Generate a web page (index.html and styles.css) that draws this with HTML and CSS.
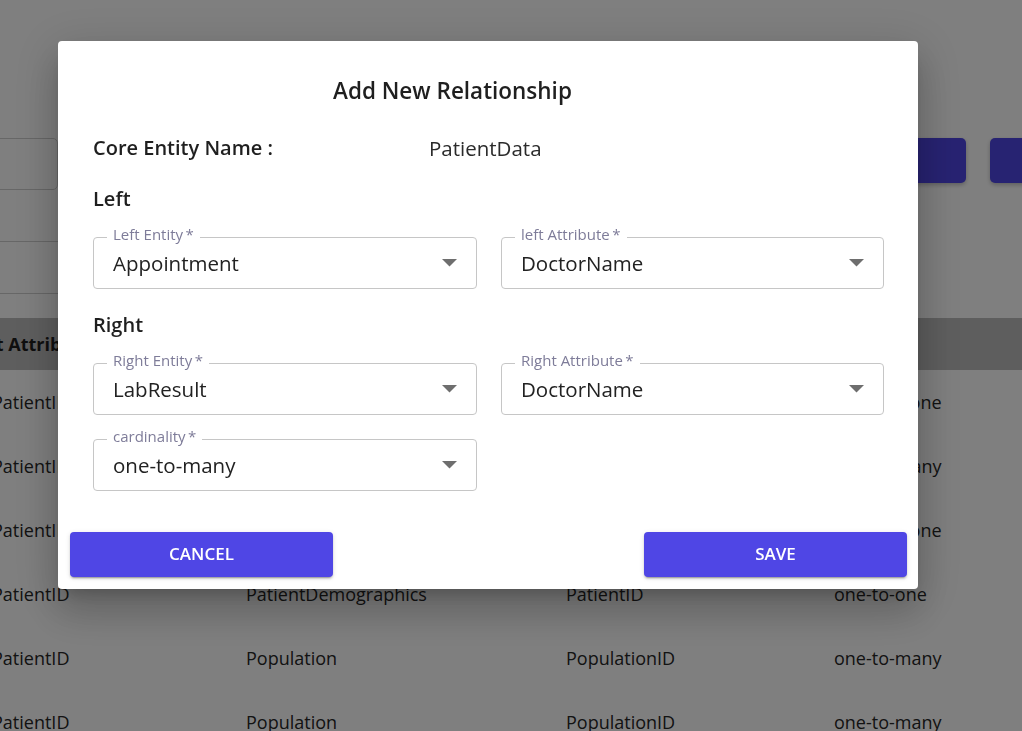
FILE: index.html
```html
<!DOCTYPE html>
<html lang="en">
<head>
<meta charset="utf-8">
<title>Add New Relationship</title>
<link rel="stylesheet" href="styles.css">
</head>
<body>
<div class="page">
  <div class="toolbar">
    <div class="side-list">
      <div class="side-box"></div>
      <div class="side-item"></div>
      <div class="side-item"></div>
    </div>
    <div class="actions">
      <div class="bg-btn"></div>
      <div class="bg-btn"></div>
    </div>
  </div>
  <div class="table">
    <div class="trow thead">
      <div class="cell c1">Left Attribute</div>
      <div class="cell">Right Entity</div>
      <div class="cell">Right Attribute</div>
      <div class="cell">Type</div>
    </div>
    <div class="trow">
      <div class="cell c1">PatientID</div>
      <div class="cell">Appointment</div>
      <div class="cell">PatientID</div>
      <div class="cell">many-to-one</div>
    </div>
    <div class="trow">
      <div class="cell c1">PatientID</div>
      <div class="cell">LabResult</div>
      <div class="cell">PatientID</div>
      <div class="cell">one-to-many</div>
    </div>
    <div class="trow">
      <div class="cell c1">PatientID</div>
      <div class="cell">Admission</div>
      <div class="cell">PatientID</div>
      <div class="cell">many-to-one</div>
    </div>
    <div class="trow">
      <div class="cell c1">PatientID</div>
      <div class="cell">PatientDemographics</div>
      <div class="cell">PatientID</div>
      <div class="cell">one-to-one</div>
    </div>
    <div class="trow">
      <div class="cell c1">PatientID</div>
      <div class="cell">Population</div>
      <div class="cell">PopulationID</div>
      <div class="cell">one-to-many</div>
    </div>
    <div class="trow">
      <div class="cell c1">PatientID</div>
      <div class="cell">Population</div>
      <div class="cell">PopulationID</div>
      <div class="cell">one-to-many</div>
    </div>
  </div>
</div>

<div class="overlay">
  <div class="dialog">
    <h2 class="dialog-title">Add New Relationship</h2>
    <div class="dialog-body">
      <div class="core-row">
        <span class="core-label">Core Entity Name :</span>
        <span class="core-value">PatientData</span>
      </div>
      <h3 class="section">Left</h3>
      <div class="field-grid">
        <div class="field">
          <span class="field-label">Left Entity&thinsp;*</span>
          <span class="field-value">Appointment</span>
          <svg class="arrow" width="15" height="8" viewBox="0 0 15 8"><polygon points="0,0 15,0 7.5,7.5"/></svg>
        </div>
        <div class="field">
          <span class="field-label">left Attribute&thinsp;*</span>
          <span class="field-value">DoctorName</span>
          <svg class="arrow" width="15" height="8" viewBox="0 0 15 8"><polygon points="0,0 15,0 7.5,7.5"/></svg>
        </div>
      </div>
      <h3 class="section">Right</h3>
      <div class="field-grid">
        <div class="field">
          <span class="field-label">Right Entity&thinsp;*</span>
          <span class="field-value">LabResult</span>
          <svg class="arrow" width="15" height="8" viewBox="0 0 15 8"><polygon points="0,0 15,0 7.5,7.5"/></svg>
        </div>
        <div class="field">
          <span class="field-label">Right Attribute&thinsp;*</span>
          <span class="field-value">DoctorName</span>
          <svg class="arrow" width="15" height="8" viewBox="0 0 15 8"><polygon points="0,0 15,0 7.5,7.5"/></svg>
        </div>
        <div class="field">
          <span class="field-label">cardinality&thinsp;*</span>
          <span class="field-value">one-to-many</span>
          <svg class="arrow" width="15" height="8" viewBox="0 0 15 8"><polygon points="0,0 15,0 7.5,7.5"/></svg>
        </div>
      </div>
    </div>
    <div class="dialog-actions">
      <button class="btn">CANCEL</button>
      <button class="btn">SAVE</button>
    </div>
  </div>
</div>
</body>
</html>
```

FILE: styles.css
```css
* { box-sizing: border-box; }

html, body {
  margin: 0;
  padding: 0;
  height: 100%;
  overflow: hidden;
}

body {
  font-family: "Open Sans", "Noto Sans", sans-serif;
  background: #ffffff;
  color: #333;
}

.page {
  padding-top: 138px;
}

.toolbar {
  display: flex;
  justify-content: space-between;
  align-items: flex-start;
}

.side-list {
  width: 68px;
  margin-left: -10px;
}

.side-box {
  height: 52px;
  border: 1px solid #cfcfcf;
  border-radius: 5px;
}

.side-item {
  height: 52px;
  border-bottom: 1px solid #cfcfcf;
}

.actions {
  display: flex;
  gap: 24px;
  margin-right: -88px;
}

.bg-btn {
  width: 120px;
  height: 45px;
  background: #4f46e5;
  border-radius: 5px;
  box-shadow: 0 2px 4px rgba(0, 0, 0, 0.25);
}

.table {
  margin-top: 24px;
  margin-left: -32px;
}

.trow {
  display: grid;
  grid-template-columns: 278px 320px 268px 1fr;
  align-items: center;
  height: 64px;
  font-size: 18px;
  color: #262626;
}

.trow.thead {
  height: 52px;
  background: #bdbdbd;
  font-weight: 700;
  color: #1e1e1e;
}

.cell {
  white-space: nowrap;
}

.trow:not(.thead) .c1 {
  padding-left: 24px;
}

/* overlay + dialog */
.overlay {
  position: fixed;
  inset: 0;
  background: rgba(0, 0, 0, 0.5);
  padding: 41px 0 0 58px;
}

.dialog {
  width: 860px;
  height: 548px;
  background: #fff;
  border-radius: 4px;
  box-shadow: 0 11px 15px -7px rgba(0, 0, 0, 0.2),
              0 24px 38px 3px rgba(0, 0, 0, 0.14),
              0 9px 46px 8px rgba(0, 0, 0, 0.12);
  display: flex;
  flex-direction: column;
}

.dialog-title {
  margin: 0;
  padding: 35px 0 0 275px;
  font-size: 22.5px;
  line-height: 30px;
  font-weight: 600;
  color: #1f1f1f;
}

.dialog-body {
  padding: 0 34px 0 35px;
}

.core-row {
  display: flex;
  margin-top: 28px;
  font-size: 20px;
  line-height: 28px;
}

.core-label {
  width: 336px;
  font-weight: 600;
  color: #1f1f1f;
}

.core-value {
  font-size: 20.5px;
  color: #2b2b2b;
}

.section {
  margin: 22px 0 0;
  font-size: 20px;
  line-height: 28px;
  font-weight: 600;
  color: #1f1f1f;
}

.section:first-of-type {
  margin-top: 23px;
}

.field-grid {
  display: grid;
  grid-template-columns: 384px 383px;
  column-gap: 24px;
  row-gap: 24px;
  margin-top: 24px;
}

.field {
  position: relative;
  height: 52px;
  border: 1px solid #c6c6c6;
  border-radius: 4px;
  display: flex;
  align-items: center;
  padding: 0 19px 1px 19px;
}

.field-label {
  position: absolute;
  top: -13px;
  left: 13px;
  padding: 0 6px;
  background: #fff;
  font-size: 15px;
  line-height: 18px;
  color: #7e7c99;
  white-space: nowrap;
}

.field-value {
  flex: 1;
  font-size: 20.5px;
  line-height: 28px;
  color: #222;
}

.arrow {
  fill: #6e6e6e;
  flex: none;
}

.dialog-actions {
  margin-top: auto;
  display: flex;
  justify-content: space-between;
  padding: 0 11px 12px 12px;
}

.btn {
  width: 263px;
  height: 45px;
  border: none;
  border-radius: 4px;
  background: #4f46e5;
  color: #fff;
  font-family: "Open Sans", "Noto Sans", sans-serif;
  font-size: 17px;
  font-weight: 600;
  line-height: 24px;
  padding: 0 0 2px;
  box-shadow: 0 3px 1px -2px rgba(0, 0, 0, 0.2),
              0 2px 2px 0 rgba(0, 0, 0, 0.14),
              0 1px 5px 0 rgba(0, 0, 0, 0.12);
  cursor: pointer;
}
```
